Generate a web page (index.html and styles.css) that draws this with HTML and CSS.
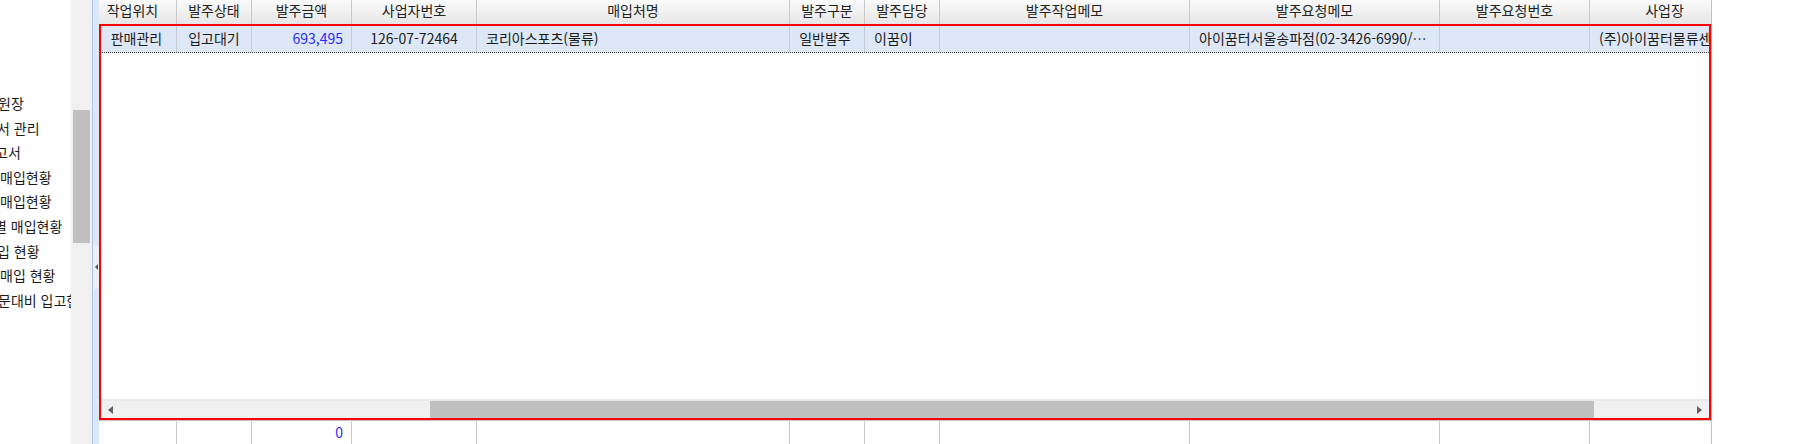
FILE: index.html
```html
<!DOCTYPE html>
<html lang="ko">
<head>
<meta charset="utf-8">
<link rel="stylesheet" href="styles.css">
</head>
<body>
<div class="app">
  <nav class="tree">
    <div class="item cut2">원장</div>
    <div class="item cut3">서 관리</div>
    <div class="item cut5">고서</div>
    <div class="item">매입현황</div>
    <div class="item">매입현황</div>
    <div class="item cut6">별 매입현황</div>
    <div class="item cut3">입 현황</div>
    <div class="item">매입 현황</div>
    <div class="item cut2">문대비 입고현황</div>
  </nav>
  <div class="vscroll"><div class="vthumb"></div></div>
  <div class="splitter"><div class="handle"><span class="harrow"></span></div></div>
  <div class="grid">
    <div class="hdr cols">
      <div class="hc c1">작업위치</div>
      <div class="hc">발주상태</div>
      <div class="hc">발주금액</div>
      <div class="hc">사업자번호</div>
      <div class="hc">매입처명</div>
      <div class="hc">발주구분</div>
      <div class="hc">발주담당</div>
      <div class="hc">발주작업메모</div>
      <div class="hc">발주요청메모</div>
      <div class="hc">발주요청번호</div>
      <div class="hc">사업장</div>
    </div>
    <div class="body">
      <div class="row cols">
        <div class="dc center c1">판매관리</div>
        <div class="dc center">입고대기</div>
        <div class="dc right num">693,495</div>
        <div class="dc center">126-07-72464</div>
        <div class="dc left">코리아스포츠(물류)</div>
        <div class="dc center c6">일반발주</div>
        <div class="dc left">이꿈이</div>
        <div class="dc left"></div>
        <div class="dc left">아이꿈터서울송파점(02-3426-6990/010-1234-5678)</div>
        <div class="dc left"></div>
        <div class="dc left clip">(주)아이꿈터물류센터</div>
      </div>
      <div class="spacer"></div>
      <div class="hscroll">
        <span class="arr arr-l"></span>
        <div class="hthumb"></div>
        <span class="arr arr-r"></span>
      </div>
      <div class="hs-bottom"></div>
    </div>
    <div class="foot cols">
      <div class="fc"></div>
      <div class="fc"></div>
      <div class="fc right num">0</div>
      <div class="fc"></div>
      <div class="fc"></div>
      <div class="fc"></div>
      <div class="fc"></div>
      <div class="fc"></div>
      <div class="fc"></div>
      <div class="fc"></div>
      <div class="fc"></div>
    </div>
    <div class="mark"></div>
  </div>
  <div class="rest"></div>
</div>
</body>
</html>
```

FILE: styles.css
```css
html, body {
  margin: 0;
  padding: 0;
  background: #fff;
}
body {
  font-family: "Noto Sans CJK KR", "Noto Sans", sans-serif;
  font-size: 14px;
  color: #1a1a1a;
}
.app {
  display: flex;
  width: 1810px;
  height: 444px;
  overflow: hidden;
}
.tree {
  width: 71px;
  flex: none;
  overflow: hidden;
  padding-top: 91px;
  box-sizing: border-box;
  white-space: nowrap;
}
.item {
  height: 24.6px;
  line-height: 24px;
}
.cut2 { margin-left: -2px; }
.cut3 { margin-left: -3px; }
.cut5 { margin-left: -5px; }
.cut6 { margin-left: -6px; }

.vscroll {
  width: 21px;
  flex: none;
  background: #f0f0f0;
  padding: 110px 2px 0 2px;
  box-sizing: border-box;
}
.vthumb {
  height: 133px;
  background: #c0c0c0;
}
.splitter {
  width: 7px;
  flex: none;
  border-left: 1px solid #a9c5eb;
  background: #dde8f6;
  box-sizing: border-box;
  padding-top: 245px;
}
.handle {
  height: 44px;
  width: 6px;
  background: #eceff3;
  border-radius: 0 4px 4px 0;
  display: flex;
  align-items: center;
  justify-content: center;
}
.harrow {
  width: 0;
  height: 0;
  border-top: 3px solid transparent;
  border-bottom: 3px solid transparent;
  border-right: 3px solid #555;
}

.grid {
  position: relative;
  width: 1612px;
  flex: none;
  display: flex;
  flex-direction: column;
  overflow: hidden;
  border-right: 1px solid #a9c5eb;
}
.cols {
  display: grid;
  grid-template-columns: 78px 75px 100px 125px 313px 75px 75px 250px 250px 150px 150px;
  flex: none;
}
.hdr {
  height: 25px;
  background: linear-gradient(#fafafa, #e6e6e6);
  border-bottom: 1px solid #b8b8b8;
  box-sizing: border-box;
}
.hc {
  border-right: 1px solid #c9c9c9;
  text-align: center;
  line-height: 21px;
  white-space: nowrap;
  overflow: hidden;
  color: #222;
}
.hc.c1, .dc.c1 { padding-right: 10px; }
.body {
  flex: 1;
  display: flex;
  flex-direction: column;
  min-height: 0;
}
.row {
  height: 28px;
  background: #dde7f5;
  border-bottom: 1px dotted #444;
  box-sizing: border-box;
}
.dc {
  border-right: 1px solid #c4cad3;
  line-height: 27px;
  white-space: nowrap;
  overflow: hidden;
  text-overflow: ellipsis;
  padding: 0 8px;
}
.dc.clip { text-overflow: clip; }
.center { text-align: center; }
.left { text-align: left; padding-left: 9px; }
.right { text-align: right; padding-right: 8px; }
.dc.c6 { padding-right: 12px; }
.num { color: #2b2bff; }
.spacer { flex: 1; }
.hscroll {
  height: 19px;
  flex: none;
  background: #f0f0f0;
  border-top: 2px solid #e9e9e9;
  box-sizing: border-box;
  display: flex;
  align-items: center;
}
.arr {
  width: 0;
  height: 0;
  border-top: 4px solid transparent;
  border-bottom: 4px solid transparent;
  flex: none;
}
.arr-l {
  border-right: 5px solid #606060;
  margin-left: 9px;
}
.arr-r {
  border-left: 5px solid #606060;
  margin-left: auto;
  margin-right: 9px;
}
.hthumb {
  align-self: stretch;
  margin-left: 317px;
  width: 1164px;
  background: #c0c0c0;
}
.hs-bottom {
  height: 2px;
  flex: none;
  background: #f0f0f0;
}
.foot {
  height: 24px;
  border-top: 1px solid #c9c9c9;
  box-sizing: border-box;
  background: #fff;
}
.fc {
  border-right: 1px solid #c9c9c9;
  line-height: 23px;
  padding: 0 8px;
}
.mark {
  position: absolute;
  left: 0;
  top: 24px;
  width: 1612px;
  height: 396px;
  border: 2px solid #ff0000;
  box-sizing: border-box;
  pointer-events: none;
}
.rest {
  flex: 1;
  background: #fff;
}
```
